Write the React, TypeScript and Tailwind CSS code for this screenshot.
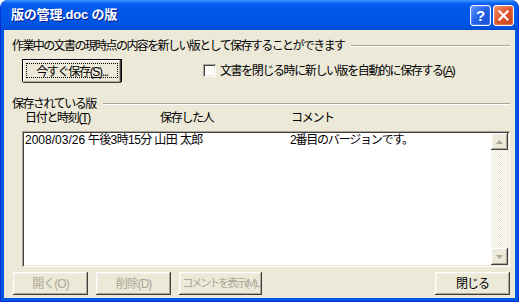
import type { ReactNode } from "react";

const font = "font-['Liberation_Sans','Noto_Sans_CJK_JP',sans-serif]";

// classic 3D edges
const raised =
  "shadow-[inset_-1px_-1px_0_#404040,inset_1px_1px_0_#ffffff,inset_-2px_-2px_0_#aca899,inset_2px_2px_0_#f1efe2]";
const sunken =
  "shadow-[inset_1px_1px_0_#aca899,inset_-1px_-1px_0_#ffffff,inset_2px_2px_0_#404040,inset_-2px_-2px_0_#ece9d8]";

const Groove = ({ className = "" }: { className?: string }) => (
  <div className={`h-0 flex-1 border-t border-b border-t-[#aca899] border-b-white ${className}`} />
);

const Button = ({
  children,
  disabled = false,
  className = "",
}: {
  children: ReactNode;
  disabled?: boolean;
  className?: string;
}) => (
  <div
    className={`flex h-[23px] items-center justify-center whitespace-nowrap bg-[#ece9d8] ${raised} ${
      disabled ? "text-[#aca899]" : "text-black"
    } ${className}`}
  >
    {children}
  </div>
);

const Arrow = ({ up }: { up?: boolean }) => (
  <div className={`flex h-[17px] w-[17px] items-center justify-center bg-[#ece9d8] ${raised}`}>
    <svg width="7" height="4" viewBox="0 0 7 4">
      <polygon points={up ? "3.5,0 7,4 0,4" : "0,0 7,0 3.5,4"} fill="#aca899" />
    </svg>
  </div>
);

export default function App() {
  return (
    <div className={`h-[306px] w-[524px] bg-white ${font}`}>
      <div className="flex h-[302px] w-[519px] flex-col overflow-hidden rounded-t-[8px] border border-t-0 border-[#0831d9] bg-[#0055e5]">
        {/* title bar */}
        <div className="flex h-[30px] items-center bg-[linear-gradient(180deg,#3d95ff_0%,#0a5ff0_12%,#0058ea_30%,#0055e5_70%,#0052e0_90%,#0048d4_100%)] pl-[10px] pr-[4px]">
          <span className="text-[13px] font-bold tracking-[-0.2px] text-white [text-shadow:1px_1px_#0a1c8a]">
            版の管理.doc の版
          </span>
          <div className="ml-auto flex gap-[2px]">
            <div className="flex h-[21px] w-[21px] items-center justify-center rounded-[3px] border border-white bg-[linear-gradient(135deg,#5a95ff,#2460e6_50%,#1a4fd8)] shadow-[inset_0_0_2px_#8fb6ff]">
              <span className="text-[15px] font-bold leading-none text-white">?</span>
            </div>
            <div className="flex h-[21px] w-[21px] items-center justify-center rounded-[3px] border border-white bg-[linear-gradient(135deg,#ef8f66,#e0552b_50%,#c8401c)] shadow-[inset_0_0_2px_#f7b9a0]">
              <svg width="11" height="11" viewBox="0 0 11 11">
                <path d="M1.5 1.5 L9.5 9.5 M9.5 1.5 L1.5 9.5" stroke="white" strokeWidth="2.2" strokeLinecap="square" />
              </svg>
            </div>
          </div>
        </div>

        {/* client area */}
        <div className="mx-[3px] mb-[3px] flex flex-1 flex-col bg-[#ece9d8] text-[12px] text-black">
          <div className="mt-[9px] flex h-[14px] items-center pl-[8px] pr-[5px]">
            <span className="whitespace-nowrap tracking-[-1.6px]">
              作業中の文書の現時点の内容を新しい版として保存することができます
            </span>
            <Groove className="ml-[7px]" />
          </div>

          <div className="mt-[6px] flex items-center pl-[18px]">
            <div className="relative h-[23px] w-[100px] border border-black">
              <Button className="h-[21px] w-[98px] tracking-[-1.3px]">
                今すぐ保存(<span className="underline">S</span>)...
              </Button>
              <div className="pointer-events-none absolute inset-[3px] border border-dotted border-black" />
            </div>
            <div className={`ml-[81px] h-[13px] w-[13px] bg-white ${sunken}`} />
            <span className="ml-[4px] whitespace-nowrap tracking-[-1.4px]">
              文書を閉じる時に新しい版を自動的に保存する(<span className="underline">A</span>)
            </span>
          </div>

          <div className="mt-[15px] flex h-[14px] items-center pl-[8px] pr-[5px]">
            <span className="tracking-[-1.5px]">保存されている版</span>
            <Groove className="ml-[7px]" />
          </div>

          <div className="flex h-[14px] items-center pl-[21px] tracking-[-1.3px]">
            <span className="w-[135px]">
              日付と時刻(<span className="underline">T</span>)
            </span>
            <span className="w-[131px]">保存した人</span>
            <span>コメント</span>
          </div>

          <div className={`ml-[18px] mt-[6px] flex h-[136px] w-[488px] bg-white p-[2px] ${sunken}`}>
            <div className="flex flex-1 flex-col">
              <div className="flex h-[14px] items-center pl-[1px]">
                <span className="w-[265px] whitespace-nowrap tracking-[-0.6px]">
                  <span className="tracking-[0px]">2008/03/26</span> 午後3時15分 山田 太郎
                </span>
                <span className="whitespace-nowrap tracking-[-1.2px]">2番目のバージョンです。</span>
              </div>
            </div>
            <div className="flex w-[17px] flex-col">
              <Arrow up />
              <div className="flex-1 bg-[repeating-conic-gradient(#ece9d8_0_25%,#ffffff_0_50%)] bg-[length:2px_2px]" />
              <Arrow />
            </div>
          </div>

          <div className="mt-[5px] flex pl-[9px] text-[12px]">
            <Button disabled className="w-[75px] tracking-[-1px]">
              開く(O)
            </Button>
            <Button disabled className="ml-[8px] w-[75px] tracking-[-1px]">
              削除(D)
            </Button>
            <Button disabled className="ml-[8px] w-[83px] text-[11px] tracking-[-2px]">
              コメントを表示(M)...
            </Button>
            <Button className="ml-[173px] w-[75px] tracking-[-1px]">閉じる</Button>
          </div>
        </div>
      </div>
    </div>
  );
}
